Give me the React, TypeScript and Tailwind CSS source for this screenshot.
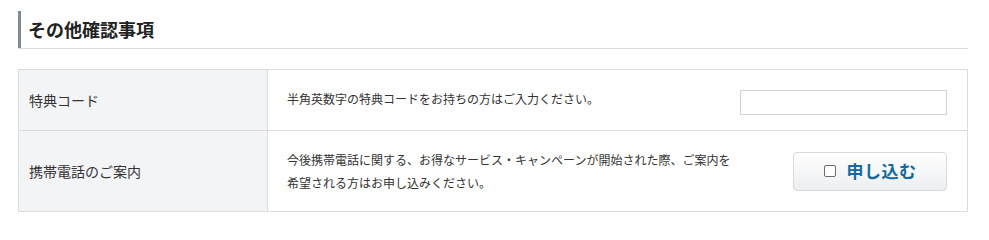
const font = { fontFamily: '"Noto Sans CJK JP", "Noto Sans", sans-serif' };

function Row({
  label,
  children,
  height,
  last,
}: {
  label: string;
  children: React.ReactNode;
  height: string;
  last?: boolean;
}) {
  return (
    <div className={`flex ${height} ${last ? "" : "border-b border-[#dcdcdc]"}`}>
      <div className="w-[249px] flex-shrink-0 bg-[#f3f4f6] border-r border-[#dcdcdc] flex items-center pl-[10px] text-[14px] text-[#333]">
        {label}
      </div>
      <div className="flex-1 flex items-center justify-between pl-[19px] pr-[20px]">{children}</div>
    </div>
  );
}

export default function App() {
  return (
    <div className="bg-white w-[989px] h-[231px] px-[18px] pt-[11px] text-[#333]" style={font}>
      <div className="w-[950px] border-b border-[#dcdcdc]">
        <div className="h-[37px] border-l-[3px] border-[#7f8a96] pl-[7px] flex items-center text-[18px] font-bold text-[#222]">
          その他確認事項
        </div>
      </div>

      <div className="mt-[20px] w-[950px] border border-[#dcdcdc]">
        <Row label="特典コード" height="h-[61px]">
          <p className="text-[12px] -mt-[2px]">半角英数字の特典コードをお持ちの方はご入力ください。</p>
          <input
            type="text"
            className="w-[207px] h-[25px] mt-[5px] border border-[#d4d4d4] bg-white outline-none"
          />
        </Row>
        <Row label="携帯電話のご案内" height="h-[80px]" last>
          <p className="text-[12px] leading-[23px] w-[452px]">
            今後携帯電話に関する、お得なサービス・キャンペーンが開始された際、ご案内を希望される方はお申し込みください。
          </p>
          <button className="w-[154px] h-[39px] rounded-[4px] border border-[#dadada] bg-gradient-to-b from-white to-[#eceef1] flex items-center justify-center gap-[11px]">
            <span className="w-[12px] h-[12px] rounded-[2px] border border-[#6b6b6b] bg-white" />
            <span className="text-[17px] font-bold text-[#146a9e] tracking-[0.5px]">申し込む</span>
          </button>
        </Row>
      </div>
    </div>
  );
}
